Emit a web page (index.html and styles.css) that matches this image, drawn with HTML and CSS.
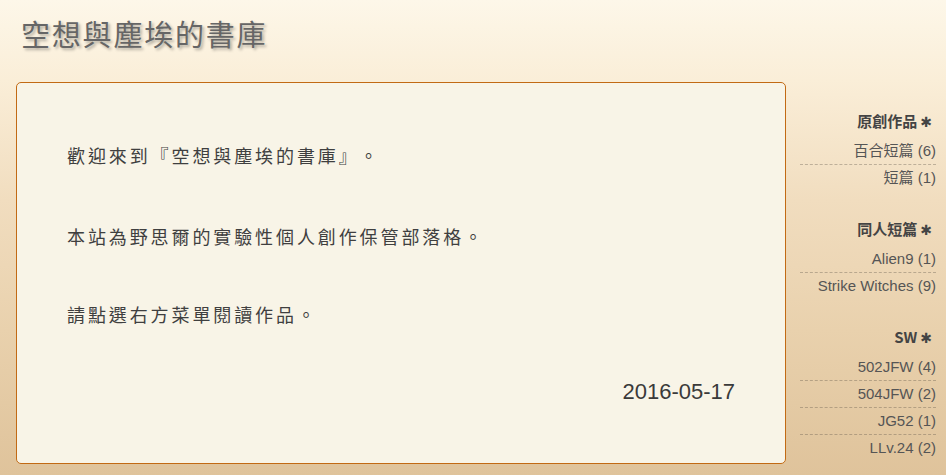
FILE: index.html
```html
<!DOCTYPE html>
<html lang="zh-Hant">
<head>
  <meta charset="UTF-8">
  <title>空想與塵埃的書庫</title>
  <link rel="stylesheet" href="styles.css">
</head>
<body>
  <header class="site-header">
    <h1>空想與塵埃的書庫</h1>
  </header>
  <div class="wrapper">
    <!-- 主要內容 -->
    <main class="post">
      <p>歡迎來到『空想與塵埃的書庫』。</p>
      <p>本站為野思爾的實驗性個人創作保管部落格。</p>
      <p>請點選右方菜單閱讀作品。</p>
      <div class="post-date">2016-05-17</div>
    </main>

    <!-- 側欄選單 -->
    <aside class="sidebar">
      <section class="menu-group">
        <h2>原創作品<span class="star">✱</span></h2>
        <ul>
          <li>百合短篇 (6)</li>
          <li>短篇 (1)</li>
        </ul>
      </section>
      <section class="menu-group">
        <h2>同人短篇<span class="star">✱</span></h2>
        <ul>
          <li>Alien9 (1)</li>
          <li>Strike Witches (9)</li>
        </ul>
      </section>
      <section class="menu-group">
        <h2>SW<span class="star">✱</span></h2>
        <ul>
          <li>502JFW (4)</li>
          <li>504JFW (2)</li>
          <li>JG52 (1)</li>
          <li>LLv.24 (2)</li>
        </ul>
      </section>
    </aside>
  </div>
</body>
</html>
```

FILE: styles.css
```css
/* 基本設定 */
* { margin: 0; padding: 0; box-sizing: border-box; }
html, body { height: 100%; }
body {
  font-family: 'Liberation Sans', Arial, 'Noto Sans CJK TC', sans-serif;
  color: #444;
  background: linear-gradient(to bottom, #fdf7e9 0, #faeed8 80px, #f1ddbf 200px, #e9d1ad 330px, #dfc39b 475px);
  overflow: hidden;
}
/* 標題 */
.site-header {
  height: 82px;
  padding: 14px 0 0 21px;
}
.site-header h1 {
  font-family: 'Noto Sans CJK TC', sans-serif;
  font-size: 29px;
  font-weight: 400;
  line-height: 38px;
  letter-spacing: 1.8px;
  color: #666;
  text-shadow: 2px 2px 3px rgba(0, 0, 0, 0.3);
}
/* 版面 */
.wrapper {
  display: flex;
  align-items: flex-start;
  padding-left: 16px;
}
/* 文章卡片 */
.post {
  width: 770px;
  height: 382px;
  background-color: #f8f4e7;
  border: 1px solid #c26a14;
  border-radius: 5px;
  padding: 59px 50px 0 50px;
  color: #3f3f3f;
}
.post p {
  font-family: 'Noto Sans CJK TC', sans-serif;
  font-size: 18px;
  line-height: 26px;
  letter-spacing: 2.9px;
  text-spacing-trim: space-all;
  margin-bottom: 52px;
}
.post p:first-child { margin-bottom: 55px; }
.post-date {
  text-align: right;
  font-size: 22px;
  line-height: 26px;
  color: #3a3a3a;
}
/* 側欄 */
.sidebar {
  width: 136px;
  margin-left: 14px;
  padding-top: 29px;
  text-align: right;
}
.menu-group + .menu-group { margin-top: 28px; }
.menu-group h2 {
  font-family: 'Noto Sans CJK TC', sans-serif;
  font-size: 15px;
  font-weight: 700;
  height: 20px;
  line-height: 20px;
  color: #444;
  margin-bottom: 7px;
  padding-right: 4px;
}
.menu-group h2 .star {
  font-family: 'DejaVu Sans', sans-serif;
  font-size: 14px;
  line-height: 1;
  margin-left: 3px;
}
.menu-group ul { list-style: none; }
.menu-group li {
  font-size: 15px;
  line-height: 26px;
  color: #555;
  border-bottom: 1px dashed rgba(90, 80, 70, 0.35);
}
.menu-group li:last-child { border-bottom: none; }
```
